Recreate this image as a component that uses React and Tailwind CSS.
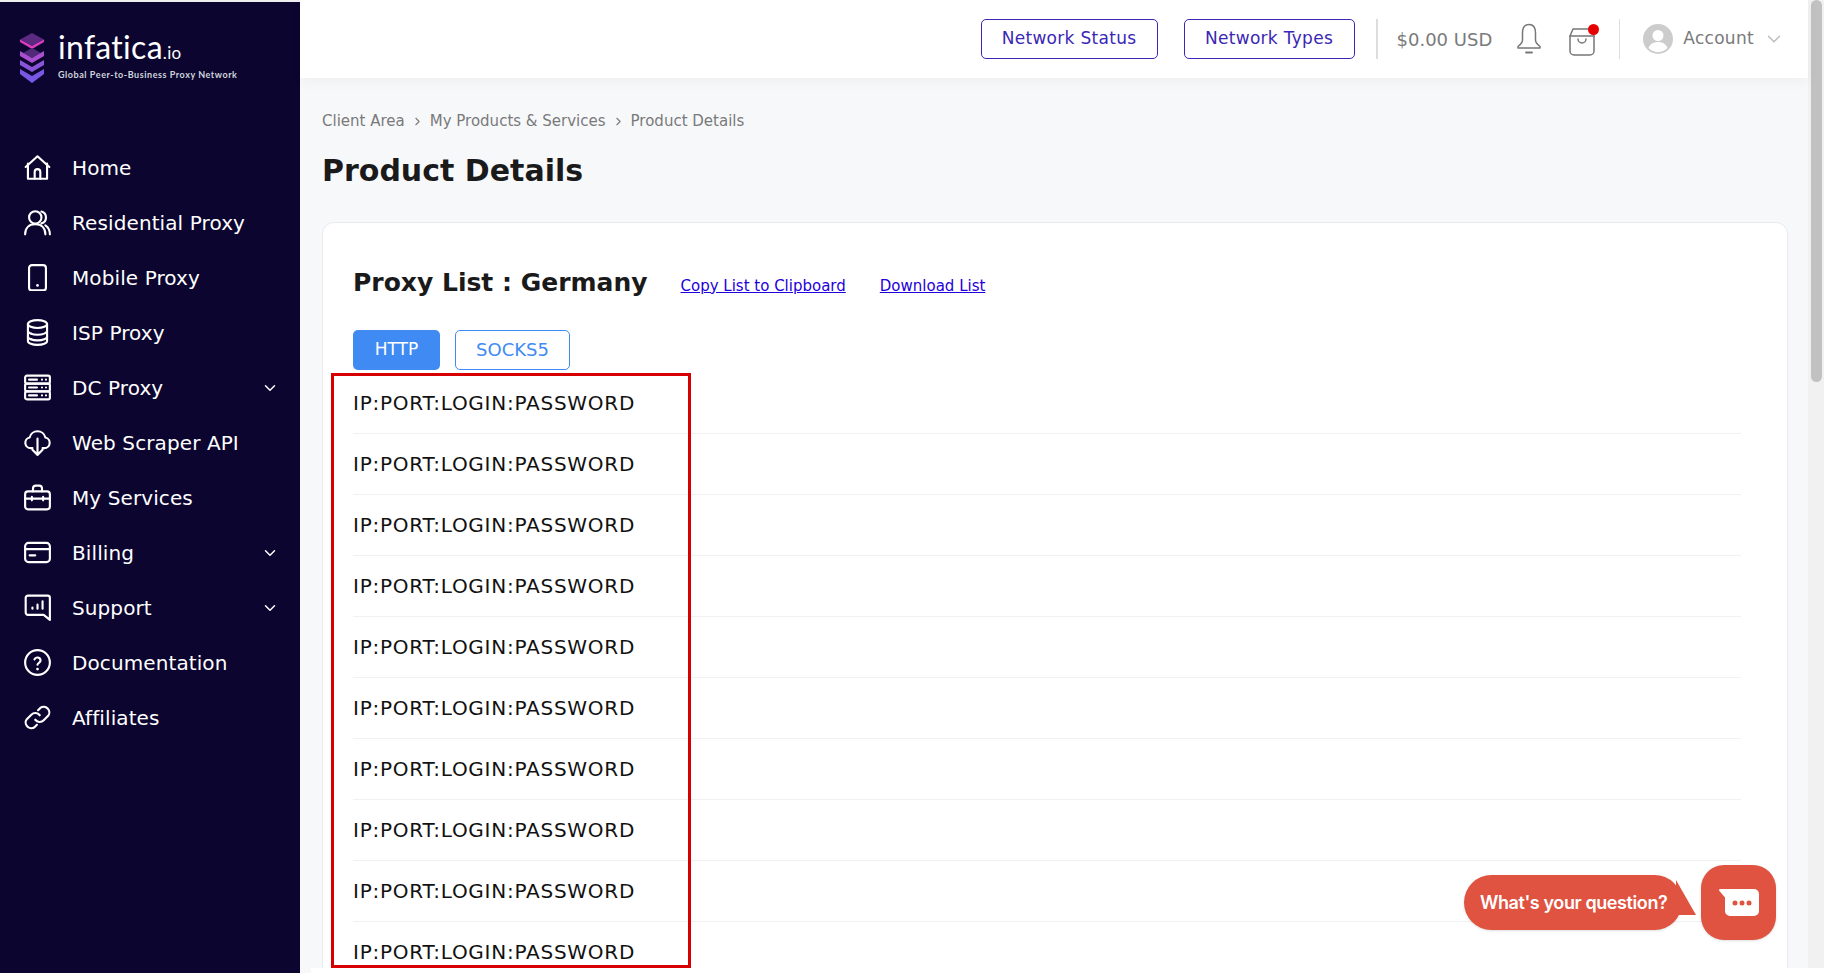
import React from "react";
import { ChevronDown, ChevronRight } from "lucide-react";

const font = "font-['DejaVu_Sans',Verdana,sans-serif]";

const Ico = ({ children }) => (
  <svg viewBox="0 0 24 24" className="w-[27px] h-[27px] shrink-0" fill="none" stroke="currentColor" strokeWidth="1.9" strokeLinecap="round" strokeLinejoin="round">
    {children}
  </svg>
);

const navItems = [
  { label: "Home", icon: <><path d="M1.5 11.5 12 2l10.500 9.500" /><path d="M3.500 8.500V22h17V8.500" /><path d="M9.500 22v-6a2.500 2.500 0 0 1 5 0v6" /></> },
  { label: "Residential Proxy", icon: <><circle cx="10" cy="7.500" r="5.500" /><path d="M1 22.500c0-5.500 3.500-9 9-9s9 3.500 9 9" /><path d="M15.500 2.200a5.500 5.500 0 0 1 0 10.600" /><path d="M19 14.500c2.500 1.500 4 4.500 4 8" /></> },
  { label: "Mobile Proxy", icon: <><rect x="4.500" y="1" width="15" height="22.500" rx="2.500" /><path d="M12 19h.01" strokeWidth="2.400" /></> },
  { label: "ISP Proxy", icon: <><ellipse cx="12" cy="4.500" rx="8.500" ry="3.500" /><path d="M3.500 4.500v15c0 2 3.800 3.500 8.500 3.500s8.500-1.500 8.500-3.500v-15" /><path d="M3.500 10.500c0 2 3.800 3.500 8.500 3.500s8.500-1.500 8.500-3.500" /><path d="M3.500 15.500c0 2 3.800 3.500 8.500 3.500s8.500-1.500 8.500-3.500" /><path d="M6.500 13h.01M6.500 18h.01" /></> },
  { label: "DC Proxy", arrow: true, icon: <><rect x="1" y="1.500" width="22" height="7" rx="1.500" /><rect x="1" y="8.500" width="22" height="7" rx="1.500" /><rect x="1" y="15.500" width="22" height="7" rx="1.500" /><path d="M4.500 5h7M4.500 12h7M4.500 19h7M16 5h.01M19.500 5h.01M16 12h.01M19.500 12h.01M16 19h.01M19.500 19h.01" /></> },
  { label: "Web Scraper API", icon: <><path d="M7.500 17H6a4.800 4.800 0 0 1-1-9.500 7.200 7.200 0 0 1 14 0 4.800 4.800 0 0 1-1 9.500h-1.500" /><path d="M12 8.500V23M7.500 18.500 12 23l4.500-4.500" /></> },
  { label: "My Services", icon: <><rect x="1" y="6.500" width="22" height="16" rx="2.500" /><path d="M8 6.500V4a2.500 2.500 0 0 1 2.500-2.500h3A2.500 2.500 0 0 1 16 4v2.500" /><path d="M1 13h22M7 11.500v3M17 11.500v3" /></> },
  { label: "Billing", arrow: true, icon: <><rect x="1" y="3.500" width="22" height="17" rx="3" /><path d="M1 9h22M5 14.500h5" /></> },
  { label: "Support", arrow: true, icon: <><path d="M3.500 1.500H21a2 2 0 0 1 2 2V23l-5.500-4.500h-14a2 2 0 0 1-2-2v-13a2 2 0 0 1 2-2z" /><path d="M7.500 13v-1M12 13V9.500M16.500 13V6.500" /></> },
  { label: "Documentation", icon: <><circle cx="12" cy="12" r="11" /><path d="M9.300 9.300a2.800 2.800 0 0 1 5.400 1c0 1.900-2.700 2.300-2.700 3.700" /><path d="M12 17.800h.01" strokeWidth="2.400" /></> },
  { label: "Affiliates", icon: <><path d="M10 14a5 5 0 0 0 7.500.5l4-4a5 5 0 0 0-7-7L12.500 5.500" /><path d="M14 10a5 5 0 0 0-7.500-.5l-4 4a5 5 0 0 0 7 7l2-2" /></> },
];

const Logo = () => (
  <div className="flex items-start gap-[14px] pl-[20px]">
    <svg viewBox="0 0 24 50" className="w-[24px] h-[50px] shrink-0">
      <path d="M12 0 24 6.500 12 13 0 6.500z" fill="#5b2a80" />
      <path d="M0 6.500 12 13 24 6.500V9L12 16 0 9z" fill="#e03cc0" />
      <path d="M12 15 21 20 12 25 3 20z" fill="#4f2a78" />
      <path d="M0 18 12 25 24 18V23L12 30 0 23z" fill="#a94fd0" />
      <path d="M0 27 12 34 24 27V32L12 39 0 32z" fill="#8a55d8" />
      <path d="M0 36 12 43 24 36V41L12 50 0 41z" fill="#7a58e6" />
    </svg>
    <div className="flex flex-col text-white -mt-[3px]">
      <div className="font-['Lato',sans-serif] leading-[34px] text-[32px] tracking-[0.3px]">infatica<span className="text-[17px]">.io</span></div>
      <div className="font-['Lato',sans-serif] font-bold leading-[10px] text-[9px] tracking-[0.55px] text-gray-300">Global Peer-to-Business Proxy Network</div>
    </div>
  </div>
);

const Sidebar = () => (
  <aside className={`w-[300px] shrink-0 bg-[#0b0530] border-t-[2px] border-[#efefef] text-white flex flex-col ${font}`}>
    <div className="h-[50px] mt-[31px]"><Logo /></div>
    <nav className="mt-[57px] flex flex-col">
      {navItems.map((it) => (
        <div key={it.label} className="h-[55px] flex items-center pl-[24px] pr-[21px]">
          <Ico>{it.icon}</Ico>
          <span className="ml-[21px] text-[20px] flex-1 tracking-[0.1px]">{it.label}</span>
          {it.arrow && <ChevronDown size={18} strokeWidth={2} />}
        </div>
      ))}
    </nav>
  </aside>
);

const Header = () => (
  <header className="h-[78px] shrink-0 bg-white shadow-[0_4px_12px_rgba(0,0,0,0.04)] flex items-center justify-end pr-[23px] relative z-10">
    <button className="w-[177px] h-[40px] border border-[#3a27b5] rounded-[5px] text-[#3a27b5] text-[17px] tracking-[0.3px]">Network Status</button>
    <button className="ml-[26px] w-[171px] h-[40px] border border-[#3a27b5] rounded-[5px] text-[#3a27b5] text-[17px] tracking-[0.3px]">Network Types</button>
    <div className="ml-[21px] w-[2px] h-[40px] bg-[#dddddd]"></div>
    <span className="ml-[19px] text-[18px] text-[#7a7a7a]">$0.00 USD</span>
    <svg viewBox="0 0 26 32" className="ml-[24px] w-[26px] h-[32px]" fill="none" stroke="#777777" strokeWidth="1.5" strokeLinejoin="round" strokeLinecap="round">
      <path d="M13 1.500C8 1.500 6.500 5.500 6.500 10v7c0 2.500-2.500 5-4.500 6.500v1.500h22v-1.500c-2-1.500-4.500-4-4.500-6.500v-7c0-4.500-1.500-8.500-6.500-8.500z" />
      <path d="M10 29.500h6" strokeWidth="1.800" />
    </svg>
    <div className="ml-[27px] relative w-[30px] h-[34px]">
      <svg viewBox="0 0 26 28" className="absolute left-0 top-[6px] w-[26px] h-[28px]" fill="none" stroke="#777777" strokeWidth="1.5" strokeLinejoin="round" strokeLinecap="round">
        <path d="M1 8 4 1h18l3 7v15a4 4 0 0 1-4 4H5a4 4 0 0 1-4-4z" />
        <path d="M1 8h24" />
        <path d="M9 11a4 4 0 0 0 8 0" />
      </svg>
      <span className="absolute top-[2px] right-0 w-[11px] h-[11px] rounded-full bg-[#e60000]"></span>
    </div>
    <div className="ml-[20px] w-[1px] h-[40px] bg-[#dddddd]"></div>
    <svg viewBox="0 0 30 30" className="ml-[23px] w-[30px] h-[30px]">
      <circle cx="15" cy="15" r="15" fill="#cccccc" />
      <circle cx="15" cy="11.500" r="5.500" fill="#ffffff" />
      <path d="M5.500 24c1.500-4 5-6 9.500-6s8 2 9.500 6a13 13 0 0 1-19 0z" fill="#ffffff" />
    </svg>
    <span className="ml-[10px] text-[17px] text-[#7a7a7a] tracking-[0.3px]">Account</span>
    <ChevronDown size={22} strokeWidth={1.5} className="ml-[9px] text-[#bbbbbb]" />
  </header>
);

const Breadcrumb = () => (
  <div className="flex items-center text-[15px] text-[#7a7a7a]">
    <span>Client Area</span>
    <ChevronRight size={13} className="mx-[6px]" />
    <span>My Products &amp; Services</span>
    <ChevronRight size={13} className="mx-[6px]" />
    <span>Product Details</span>
  </div>
);

const Chat = () => (
  <div className="absolute right-[32px] bottom-[33px] flex items-center z-20">
    <div className="relative h-[55px] w-[218px] rounded-[28px] bg-[#df5340] flex items-center pl-[16px] shadow-sm">
      <span className="font-['Inter',sans-serif] font-semibold tracking-[-0.4px] text-[18px] text-white whitespace-nowrap">What's your question?</span>
      <svg viewBox="0 0 20 35" className="absolute right-[-14px] top-[5px] w-[20px] h-[35px]"><path d="M0 0 20 35H0z" fill="#df5340" /></svg>
    </div>
    <div className="ml-[19px] w-[75px] h-[75px] rounded-[23px] bg-[#df5340] flex items-center justify-center shadow-sm">
      <svg viewBox="0 0 40 27" className="w-[40px] h-[27px]">
        <path d="M0 1.500C0 .5.5 0 1.500 0H35a5 5 0 0 1 5 5v17a5 5 0 0 1-5 5H11a5 5 0 0 1-5-5V8.500z" fill="#ffffff" />
        <circle cx="16" cy="14" r="2.500" fill="#df5340" /><circle cx="23" cy="14" r="2.500" fill="#df5340" /><circle cx="30" cy="14" r="2.500" fill="#df5340" />
      </svg>
    </div>
  </div>
);

export default function App() {
  const rows = Array.from({ length: 10 });
  return (
    <div className={`h-[973px] w-full overflow-hidden flex bg-white ${font}`}>
      <Sidebar />
      <div className="flex-1 min-w-0 flex flex-col bg-[#f7f8fa] relative">
        <Header />
        <main className="flex-1 min-h-0 pl-[22px] pr-[20px] pt-[32px]">
          <Breadcrumb />
          <h1 className="mt-[18px] text-[30px] leading-[40px] font-bold text-[#1a1a1a]">Product Details</h1>
          <section className="mt-[31px] bg-white border border-[#e8eaee] rounded-t-[12px] pl-[30px] pr-[46px] h-[800px]">
            <div className="pt-[41px] flex items-center h-[79px]">
              <h2 className="text-[25px] font-bold text-[#1a1a1a]">Proxy List : Germany</h2>
              <a className="ml-[33px] mt-[7px] text-[15px] text-[#2200dd] underline">Copy List to Clipboard</a>
              <a className="ml-[34px] mt-[7px] text-[15px] text-[#2200dd] underline">Download List</a>
            </div>
            <div className="mt-[28px] flex">
              <button className="w-[87px] h-[40px] rounded-[5px] bg-[#3f8bf3] text-white text-[17px]">HTTP</button>
              <button className="ml-[15px] w-[115px] h-[40px] rounded-[5px] border border-[#3f8bf3] text-[#3f8bf3] text-[18px]">SOCKS5</button>
            </div>
            <div className="mt-[3px]">
              {rows.map((_, i) => (
                <div key={i} className="h-[61px] flex items-center border-b border-[#f0f1f3] text-[20px] tracking-[0.75px] text-[#111111]">IP:PORT:LOGIN:PASSWORD</div>
              ))}
            </div>
          </section>
        </main>
        {/* red annotation box drawn over the list */}
        <div className="absolute left-[31px] top-[373px] w-[360px] h-[595px] border-[3px] border-[#d60000]"></div>
        <Chat />
        <div className="absolute left-[11px] right-0 bottom-0 h-[5px] bg-white"></div>
      </div>
      <div className="w-[16px] shrink-0 bg-[#f1f1f1] relative h-[968px]">
        <div className="absolute left-[3px] right-[2px] top-0 h-[382px] rounded-full bg-[#c1c1c1]"></div>
      </div>
    </div>
  );
}
